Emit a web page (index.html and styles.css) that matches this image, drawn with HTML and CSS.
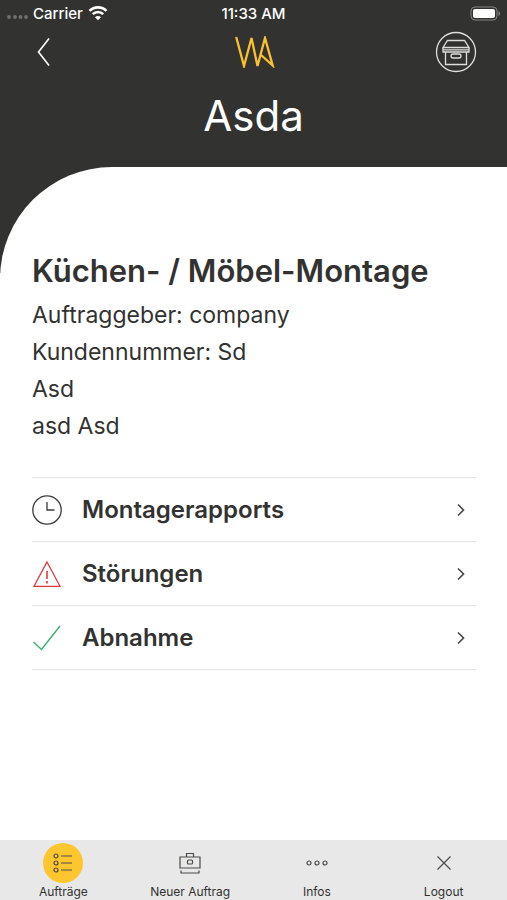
FILE: index.html
```html
<!DOCTYPE html>
<html lang="de">
<head>
	<meta charset="utf-8">
	<meta name="viewport" content="width=device-width, initial-scale=1">
	<title>Auftrag</title>
	<link rel="stylesheet" href="styles.css">
</head>
<body>
	<div class="app">
		<header class="header">
			<div class="status">
				<div class="status-left">
					<svg width="22" height="14" viewBox="0 0 22 14" fill="#70706e">
						<circle cx="3" cy="11" r="1.9"/><circle cx="9" cy="11" r="1.9"/><circle cx="14.500" cy="11" r="1.9"/><circle cx="20" cy="11" r="1.9"/>
					</svg>
					<span>Carrier</span>
					<svg width="20" height="16" viewBox="0 0 20 16" fill="none" stroke="#fff" stroke-width="2.6">
						<path d="M1.5 5.9a12 12 0 0 1 17 0"/>
						<path d="M4.8 9.2a7.4 7.4 0 0 1 10.4 0"/>
						<path d="M10 15.2l-3-3a4.2 4.2 0 0 1 6 0z" fill="#fff" stroke="none"/>
					</svg>
				</div>
				<div class="status-time">11:33 AM</div>
				<div class="status-right">
					<svg width="31" height="15" viewBox="0 0 31 15">
						<rect x="1" y="1" width="26" height="13" rx="4" fill="none" stroke="#848483"/>
						<rect x="3" y="3" width="22" height="9" rx="2" fill="#fff"/>
						<path d="M28.5 5v5c2-.7 2-4.3 0-5z" fill="#848483"/>
					</svg>
				</div>
			</div>

			<nav class="nav">
				<button class="nav-btn" aria-label="Zurück">
					<svg width="24" height="40" viewBox="0 0 24 40" fill="none" stroke="#fff" stroke-width="1.6">
						<path d="M17 6.5L6.5 20 17 33.5"/>
					</svg>
				</button>
				<svg class="logo" width="40" height="32" viewBox="0 0 40 32" fill="none" stroke="#fbc02d" stroke-width="2.3">
					<path d="M1.2 1L9 30 16.500 2 22.500 30 30 2 37.700 29.500 25.500 18.500"/>
				</svg>
				<button class="nav-btn nav-btn-right" aria-label="Archiv">
					<svg width="42" height="42" viewBox="0 0 42 42" fill="none" stroke="#dededd" stroke-width="1.3">
						<circle cx="21" cy="21" r="19.5"/>
						<path d="M12.5 9.5h17l4.5 7H8zM8 16.5v4.500h26v-4.500M10.500 21v12.500h21V21M8 18.800h26"/>
						<rect x="16" y="23" width="10" height="4" rx="2"/>
					</svg>
				</button>
			</nav>

			<h1 class="title">Asda</h1>
		</header>

		<main class="main">
			<div class="card">
				<h2 class="job-title">Küchen- / Möbel-Montage</h2>
				<p class="job-line">Auftraggeber: company</p>
				<p class="job-line">Kundennummer: Sd</p>
				<p class="job-line">Asd</p>
				<p class="job-line">asd Asd</p>

				<ul class="list">
					<li>
						<a class="list-item" href="#rapports">
							<svg width="30" height="30" viewBox="0 0 30 30" fill="none" stroke="#3a3a39" stroke-width="1.3">
								<circle cx="15" cy="15" r="14.2"/>
								<path d="M15 7v8h7.5"/>
							</svg>
							<span>Montagerapports</span>
							<svg class="arrow" width="12" height="16" viewBox="0 0 12 16"><path d="M3 2.5L8.5 8 3 13.5"/></svg>
						</a>
					</li>
					<li>
						<a class="list-item" href="#stoerungen">
							<svg width="30" height="30" viewBox="0 0 30 30" fill="none" stroke="#e0393e" stroke-width="1.3">
								<path d="M15 3L28 27.3H2z"/>
								<path d="M15 12v8M15 22v2.5" stroke-width="1.6"/>
							</svg>
							<span>Störungen</span>
							<svg class="arrow" width="12" height="16" viewBox="0 0 12 16"><path d="M3 2.5L8.5 8 3 13.5"/></svg>
						</a>
					</li>
					<li>
						<a class="list-item" href="#abnahme">
							<svg width="30" height="30" viewBox="0 0 30 30" fill="none" stroke="#35b56a" stroke-width="1.4">
								<path d="M1.5 19l8 7.5L28 3"/>
							</svg>
							<span>Abnahme</span>
							<svg class="arrow" width="12" height="16" viewBox="0 0 12 16"><path d="M3 2.5L8.5 8 3 13.5"/></svg>
						</a>
					</li>
				</ul>
			</div>
		</main>

		<nav class="tabs">
			<a class="tab active" href="#auftraege">
				<span class="tab-icon">
					<svg width="20" height="20" viewBox="0 0 20 20">
						<circle cx="3" cy="3" r="2"/><circle cx="3" cy="10" r="2"/><circle cx="3" cy="17" r="2"/>
						<path d="M8 3h11M8 10h11M8 17h11"/>
					</svg>
				</span>
				<span>Aufträge</span>
			</a>
			<a class="tab" href="#neu">
				<span class="tab-icon">
					<svg width="22" height="22" viewBox="0 0 22 22">
						<path d="M1 5h20v11H1zM7.5 5V1.5h7V5M2 18.5V21h18v-2.5"/>
						<rect x="8.5" y="8" width="5" height="4" rx="1"/>
					</svg>
				</span>
				<span>Neuer Auftrag</span>
			</a>
			<a class="tab" href="#infos">
				<span class="tab-icon">
					<svg width="22" height="8" viewBox="0 0 22 8">
						<circle cx="3" cy="4" r="2"/><circle cx="11" cy="4" r="2"/><circle cx="19" cy="4" r="2"/>
					</svg>
				</span>
				<span>Infos</span>
			</a>
			<a class="tab" href="#logout">
				<span class="tab-icon">
					<svg width="16" height="16" viewBox="0 0 16 16"><path d="M1.5 1.5l13 13M14.5 1.5l-13 13"/></svg>
				</span>
				<span>Logout</span>
			</a>
		</nav>
	</div>
</body>
</html>
```
FILE: styles.css
```css
*, *::before, *::after {
  box-sizing: border-box;
  margin: 0;
  padding: 0;
}

body {
  font-family: Inter, Roboto, sans-serif;
  color: #323231;
  background-color: white;
}

a {
  color: inherit;
  text-decoration: none;
}

svg {
  display: block;
  flex-shrink: 0;
}

.app {
  min-height: 100vh;
  display: flex;
  flex-direction: column;
}

.header {
  background-color: #323231;
  color: white;
  padding-bottom: 19px;
}

/* status bar */
.status {
  display: grid;
  grid-template-columns: 1fr auto 1fr;
  align-items: center;
  height: 26px;
  padding: 0 6px;
  font-size: 15px;
  font-weight: 500;
}

.status-left {
  display: flex;
  align-items: center;
  gap: 5px;
}

.status-right {
  display: flex;
  justify-content: flex-end;
}

/* back, logo, archive */
.nav {
  display: grid;
  grid-template-columns: 1fr auto 1fr;
  align-items: center;
  height: 52px;
  padding: 0 30px 0 32px;
}

.nav-btn {
  background: none;
  border: none;
  cursor: pointer;
  justify-self: start;
}

.nav-btn-right {
  justify-self: end;
}

.title {
  font-size: 42px;
  font-weight: 400;
  line-height: 64px;
  text-align: center;
  margin-top: 6px;
}

.main {
  flex: 1;
  background: linear-gradient(#323231 106px, white 106px);
}

.card {
  min-height: 100%;
  padding: 84px 31px 32px 32px;
  background-color: white;
  border-top-left-radius: 112px;
}

.job-title {
  font-size: 31px;
  font-weight: 600;
  line-height: 40px;
  margin-bottom: 6px;
}

.job-line {
  font-size: 23px;
  line-height: 37px;
}

.list {
  list-style: none;
  margin-top: 32px;
  border-top: 1px solid #e3e3e3;
}

.list-item {
  display: flex;
  align-items: center;
  gap: 20px;
  height: 64px;
  border-bottom: 1px solid #e3e3e3;
  font-size: 24px;
  font-weight: 600;
}

.arrow {
  margin-left: auto;
  margin-right: 9px;
  fill: none;
  stroke: #4a4a49;
  stroke-width: 1.7;
}

/* bottom tabs */
.tabs {
  display: flex;
  height: 60px;
  background-color: #e8e8e8;
}

.tab {
  flex: 1;
  display: flex;
  flex-direction: column;
  align-items: center;
  gap: 1px;
  padding-top: 3px;
  font-size: 12px;
  line-height: 16px;
}

.tab-icon {
  display: flex;
  align-items: center;
  justify-content: center;
  width: 40px;
  height: 40px;
  border-radius: 50%;
}

.tab-icon svg {
  fill: none;
  stroke: #4a4a49;
  stroke-width: 1.2;
}

.active .tab-icon {
  background-color: #fec62e;
}
```
